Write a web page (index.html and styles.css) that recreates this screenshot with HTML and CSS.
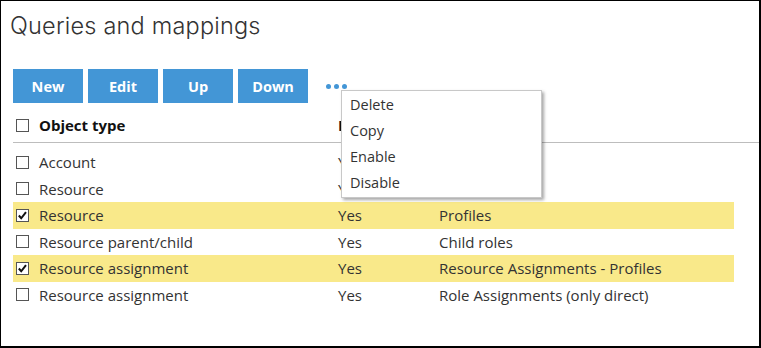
FILE: index.html
```html
<!DOCTYPE html>
<html lang="en">
<head>
<meta charset="UTF-8">
<title>Queries and mappings</title>
<link rel="stylesheet" href="styles.css">
</head>
<body>
<div class="frame">
  <h1 class="title">Queries and mappings</h1>

  <div class="toolbar">
    <button class="btn">New</button>
    <button class="btn">Edit</button>
    <button class="btn">Up</button>
    <button class="btn">Down</button>
    <div class="more">
      <span class="dot"></span><span class="dot"></span><span class="dot"></span>
      <ul class="menu">
        <li>Delete</li>
        <li>Copy</li>
        <li>Enable</li>
        <li>Disable</li>
      </ul>
    </div>
  </div>

  <div class="list">
    <div class="row head">
      <div class="cell first"><span class="box"></span>Object type</div>
      <div class="cell">Enabled</div>
      <div class="cell">Name</div>
    </div>
    <div class="row">
      <div class="cell first"><span class="box"></span>Account</div>
      <div class="cell">Yes</div>
      <div class="cell">Accounts</div>
    </div>
    <div class="row">
      <div class="cell first"><span class="box"></span>Resource</div>
      <div class="cell">Yes</div>
      <div class="cell">Resources</div>
    </div>
    <div class="row selected">
      <div class="cell first"><span class="box checked"><svg viewBox="0 0 12 12"><path d="M2 6 L4.6 9 L9.8 2.4" /></svg></span>Resource</div>
      <div class="cell">Yes</div>
      <div class="cell">Profiles</div>
    </div>
    <div class="row">
      <div class="cell first"><span class="box"></span>Resource parent/child</div>
      <div class="cell">Yes</div>
      <div class="cell">Child roles</div>
    </div>
    <div class="row selected">
      <div class="cell first"><span class="box checked"><svg viewBox="0 0 12 12"><path d="M2 6 L4.6 9 L9.8 2.4" /></svg></span>Resource assignment</div>
      <div class="cell">Yes</div>
      <div class="cell">Resource Assignments - Profiles</div>
    </div>
    <div class="row">
      <div class="cell first"><span class="box"></span>Resource assignment</div>
      <div class="cell">Yes</div>
      <div class="cell">Role Assignments (only direct)</div>
    </div>
  </div>
</div>
</body>
</html>
```

FILE: styles.css
```css
html, body {
  margin: 0;
  padding: 0;
  background: #fff;
}
.frame {
  box-sizing: border-box;
  width: 761px;
  height: 348px;
  border: 1px solid #000;
  border-right-width: 2px;
  border-bottom-width: 2px;
  font-family: "Open Sans", "Liberation Sans", sans-serif;
  font-size: 15px;
  color: #333;
  overflow: hidden;
}
.title {
  margin: 0;
  padding: 10px 0 0 9px;
  height: 40px;
  font-family: Inter, "Open Sans", sans-serif;
  font-weight: 300;
  font-size: 23.5px;
  line-height: 30px;
  color: #333;
  letter-spacing: 0.2px;
}
.toolbar {
  display: flex;
  align-items: center;
  gap: 5px;
  margin-top: 18px;
  padding-left: 12px;
  height: 34px;
}
.btn {
  width: 70px;
  height: 34px;
  border: none;
  padding: 0;
  background: #4396d6;
  color: #fff;
  font-family: "Open Sans", sans-serif;
  font-weight: 700;
  font-size: 14.5px;
}
.more {
  position: relative;
  display: flex;
  gap: 3px;
  margin-left: 13px;
  height: 34px;
  padding-top: 15px;
  box-sizing: border-box;
}
.dot {
  width: 5px;
  height: 5px;
  border-radius: 50%;
  background: #4396d6;
}
.menu {
  position: absolute;
  left: 15px;
  top: 21px;
  width: 199px;
  margin: 0;
  padding: 1px 0 1px;
  list-style: none;
  background: #fff;
  border: 1px solid #c8c8c8;
  box-shadow: 2px 2px 3px rgba(0, 0, 0, 0.35);
  z-index: 2;
}
.menu li {
  padding-left: 8px;
  height: 26px;
  line-height: 26px;
  font-size: 14.5px;
  color: #333;
}
.list {
  margin-top: 9px;
  padding-left: 12px;
}
.row {
  display: grid;
  grid-template-columns: 325px 101px 1fr;
  align-items: center;
  height: 26.5px;
  margin-right: 25px;
}
.row.head {
  box-sizing: border-box;
  height: 31px;
  padding-bottom: 4px;
  margin-right: 0;
  border-bottom: 1px solid #bdbdbd;
  margin-bottom: 6px;
  font-weight: 700;
  color: #111;
}
.row.selected {
  background: #f9e98a;
}
.cell {
  white-space: nowrap;
  display: flex;
  align-items: center;
}
.cell.first {
  padding-left: 3px;
}
.box {
  box-sizing: border-box;
  width: 13px;
  height: 13px;
  border: 1px solid #555;
  background: #fff;
  margin-right: 10px;
  display: inline-block;
}
.box svg {
  display: block;
  width: 11px;
  height: 11px;
}
.box svg path {
  fill: none;
  stroke: #111;
  stroke-width: 2.2;
}
```
